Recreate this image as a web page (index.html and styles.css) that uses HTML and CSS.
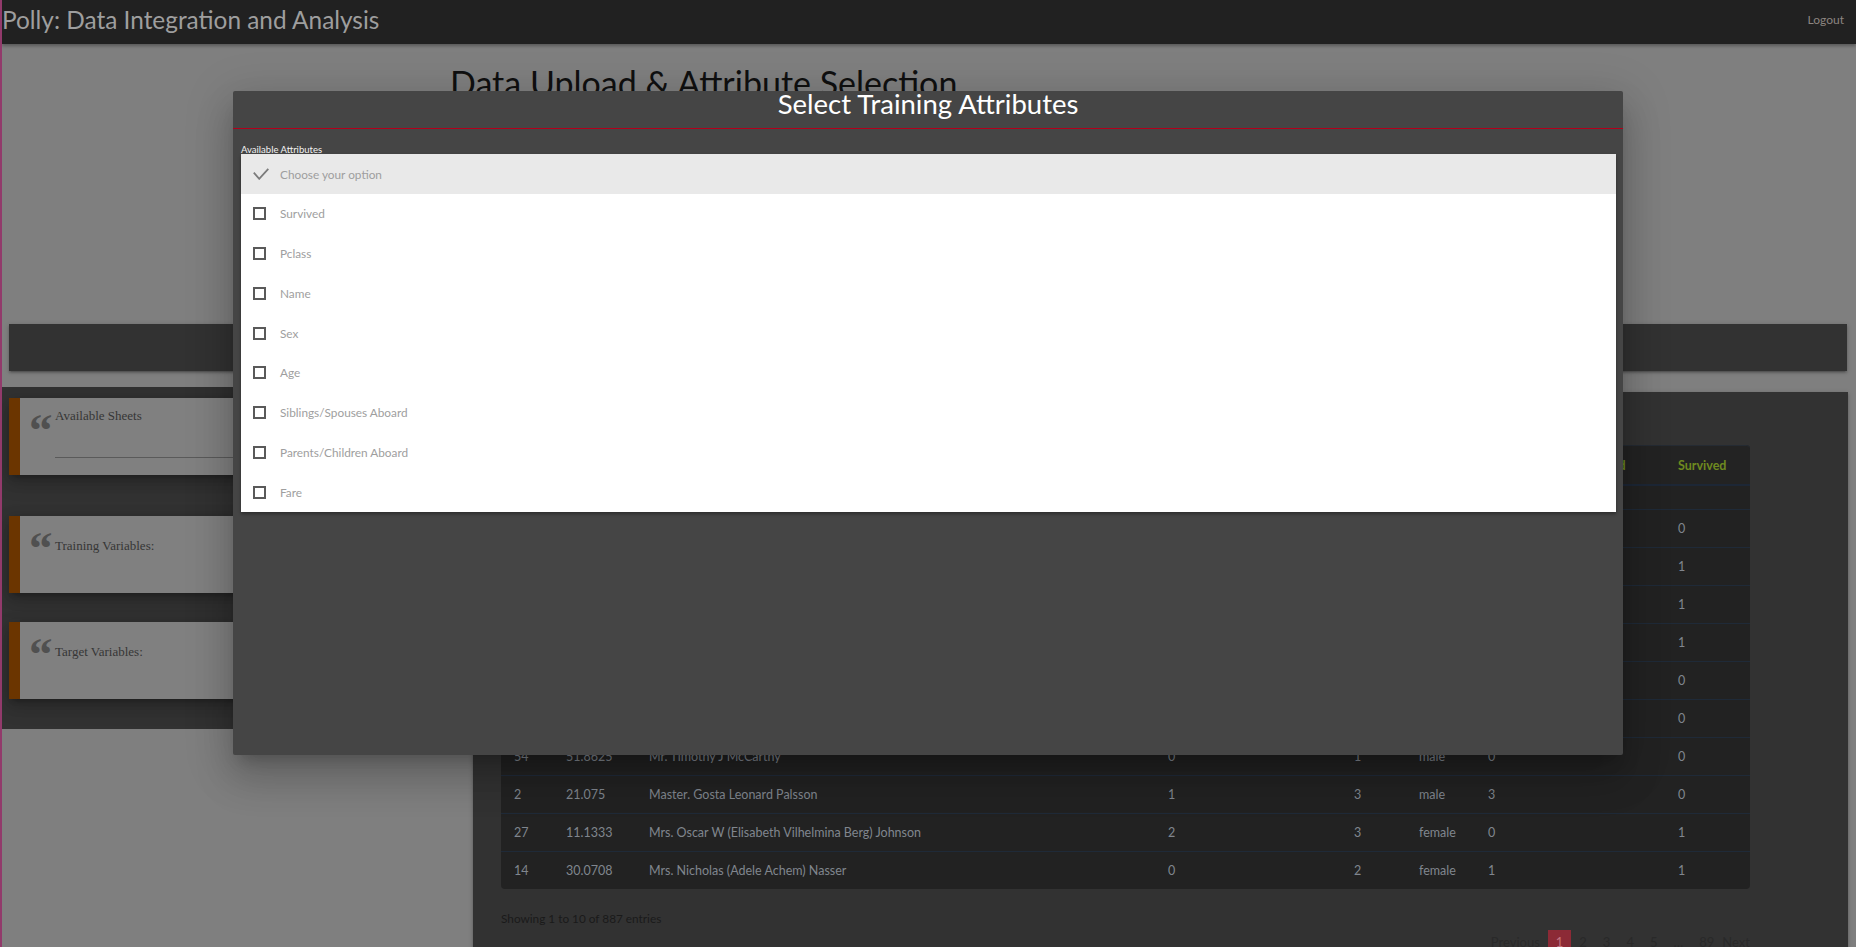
FILE: index.html
```html
<!DOCTYPE html>
<html lang="en">
<head>
<meta charset="utf-8">
<title>Polly: Data Integration and Analysis</title>
<link rel="stylesheet" href="styles.css">
</head>
<body>
<nav class="navbar">
  <a class="brand">Polly: Data Integration and Analysis</a>
  <a class="logout">Logout</a>
</nav>
<main class="page">
  <section class="upload">
    <h1 class="page-title">Data Upload &amp; Attribute Selection</h1>
  </section>
  <div class="tabs-bar"></div>
  <div class="workspace">
    <aside class="side-card">
      <div class="note note-sheets">
        <span class="quote">&ldquo;</span>
        <div class="note-body">
          <div class="note-label">Available Sheets</div>
          <div class="note-input"></div>
        </div>
      </div>
      <div class="note note-training">
        <span class="quote">&ldquo;</span>
        <div class="note-body">
          <div class="note-label note-label-low">Training Variables:</div>
        </div>
      </div>
      <div class="note">
        <span class="quote">&ldquo;</span>
        <div class="note-body">
          <div class="note-label note-label-low">Target Variables:</div>
        </div>
      </div>
    </aside>
    <section class="data-card">
      <table class="data-table">
        <colgroup>
          <col class="c-age"><col class="c-fare"><col class="c-name"><col class="c-parch">
          <col class="c-pclass"><col class="c-sex"><col class="c-sib"><col class="c-surv">
        </colgroup>
        <thead>
          <tr>
            <th>Age</th><th>Fare</th><th>Name</th><th>Parents/Children Aboard</th>
            <th>Pclass</th><th>Sex</th><th>Siblings/Spouses Aboard</th><th>Survived</th>
          </tr>
        </thead>
        <tbody>
          <tr class="spacer"><td></td><td></td><td></td><td></td><td></td><td></td><td></td><td></td></tr>
          <tr><td>22</td><td>7.25</td><td>Mr. Owen Harris Braund</td><td>0</td><td>3</td><td>male</td><td>1</td><td>0</td></tr>
          <tr><td>38</td><td>71.2833</td><td>Mrs. John Bradley (Florence Briggs Thayer) Cumings</td><td>0</td><td>1</td><td>female</td><td>1</td><td>1</td></tr>
          <tr><td>26</td><td>7.925</td><td>Miss. Laina Heikkinen</td><td>0</td><td>3</td><td>female</td><td>0</td><td>1</td></tr>
          <tr><td>35</td><td>53.1</td><td>Mrs. Jacques Heath (Lily May Peel) Futrelle</td><td>0</td><td>1</td><td>female</td><td>1</td><td>1</td></tr>
          <tr><td>35</td><td>8.05</td><td>Mr. William Henry Allen</td><td>0</td><td>3</td><td>male</td><td>0</td><td>0</td></tr>
          <tr><td>27</td><td>8.4583</td><td>Mr. James Moran</td><td>0</td><td>3</td><td>male</td><td>0</td><td>0</td></tr>
          <tr><td>54</td><td>51.8625</td><td>Mr. Timothy J McCarthy</td><td>0</td><td>1</td><td>male</td><td>0</td><td>0</td></tr>
          <tr><td>2</td><td>21.075</td><td>Master. Gosta Leonard Palsson</td><td>1</td><td>3</td><td>male</td><td>3</td><td>0</td></tr>
          <tr><td>27</td><td>11.1333</td><td>Mrs. Oscar W (Elisabeth Vilhelmina Berg) Johnson</td><td>2</td><td>3</td><td>female</td><td>0</td><td>1</td></tr>
          <tr><td>14</td><td>30.0708</td><td>Mrs. Nicholas (Adele Achem) Nasser</td><td>0</td><td>2</td><td>female</td><td>1</td><td>1</td></tr>
        </tbody>
      </table>
      <div class="table-footer">
        <div class="info">Showing 1 to 10 of 887 entries</div>
        <div class="pager">
          <span class="pg pg-text">Previous</span>
          <span class="pg pg-active">1</span>
          <span class="pg">2</span>
          <span class="pg">3</span>
          <span class="pg">4</span>
          <span class="pg">5</span>
          <span class="pg">&hellip;</span>
          <span class="pg">89</span>
          <span class="pg pg-text">Next</span>
        </div>
      </div>
    </section>
  </div>
</main>

<div class="modal">
  <div class="modal-header">Select Training Attributes</div>
  <div class="modal-body">
    <label class="field-label">Available Attributes</label>
    <ul class="option-list">
      <li class="option option-placeholder">
        <span class="opt-icon"><svg class="check" width="16" height="12" viewBox="0 0 16 12"><polyline points="0.8,4.6 6.2,10.8 15.3,0.8" fill="none" stroke="#7b7b7b" stroke-width="1.8"/></svg></span>
        <span>Choose your option</span>
      </li>
      <li class="option"><span class="opt-icon"><span class="box"></span></span><span>Survived</span></li>
      <li class="option"><span class="opt-icon"><span class="box"></span></span><span>Pclass</span></li>
      <li class="option"><span class="opt-icon"><span class="box"></span></span><span>Name</span></li>
      <li class="option"><span class="opt-icon"><span class="box"></span></span><span>Sex</span></li>
      <li class="option"><span class="opt-icon"><span class="box"></span></span><span>Age</span></li>
      <li class="option"><span class="opt-icon"><span class="box"></span></span><span>Siblings/Spouses Aboard</span></li>
      <li class="option"><span class="opt-icon"><span class="box"></span></span><span>Parents/Children Aboard</span></li>
      <li class="option"><span class="opt-icon"><span class="box"></span></span><span>Fare</span></li>
    </ul>
  </div>
</div>
</body>
</html>
```

FILE: styles.css
```css
html, body {
  margin: 0;
  height: 100%;
  overflow: hidden;
}

body {
  background: #7f7f7f;
  font-family: Lato, "Open Sans", sans-serif;
  border-left: 2px solid #923a6b;
  box-sizing: border-box;
}

/* ---------- navbar ---------- */
.navbar {
  height: 44px;
  background: #212121;
  display: flex;
  align-items: flex-start;
  justify-content: space-between;
  box-shadow: 0 2px 3px rgba(0, 0, 0, 0.3);
  position: relative;
  z-index: 1;
}

.brand {
  font-size: 24.4px;
  line-height: 40px;
  color: #9e9e9e;
}

.logout {
  font-size: 12px;
  line-height: 40px;
  color: #8c8580;
  padding-right: 12px;
}

/* ---------- page ---------- */
.upload {
  height: 280px;
}

.page-title {
  margin: 0;
  padding: 18px 0 0 448px;
  font-size: 34px;
  font-weight: 400;
  line-height: 42px;
  color: #101010;
}

.tabs-bar {
  height: 47px;
  margin: 0 9px 0 7px;
  background: #323232;
  box-shadow: 0 2px 2px rgba(0, 0, 0, 0.14), 0 3px 1px -2px rgba(0, 0, 0, 0.12), 0 1px 5px rgba(0, 0, 0, 0.2);
}

.workspace {
  display: flex;
  align-items: flex-start;
  gap: 10px;
  margin-top: 16px;
  padding-right: 8px;
}

/* ---------- left card ---------- */
.side-card {
  width: 461px;
  flex-shrink: 0;
  box-sizing: border-box;
  background: #323232;
  padding: 11px 7px 30px 7px;
}

.note {
  height: 77px;
  box-sizing: border-box;
  display: flex;
  align-items: flex-start;
  padding: 10px 0 0 9px;
  background: #808080;
  border-left: 11px solid #6b3500;
  box-shadow: 0 8px 17px 2px rgba(0, 0, 0, 0.14), 0 3px 14px 2px rgba(0, 0, 0, 0.12), 0 5px 5px -3px rgba(0, 0, 0, 0.2);
}

.note-sheets {
  margin-bottom: 41px;
}

.note-training {
  margin-bottom: 29px;
}

.quote {
  width: 26px;
  flex-shrink: 0;
  height: 45px;
  font-family: "Liberation Serif", serif;
  font-weight: 700;
  font-size: 47px;
  line-height: 45px;
  color: #505050;
}

.note-body {
  flex: 1;
  display: flex;
  flex-direction: column;
  padding-right: 20px;
}

.note-label {
  font-family: "Liberation Serif", serif;
  font-size: 13px;
  line-height: 15.6px;
  color: #363636;
}

.note-label-low {
  margin-top: 12px;
}

.note-input {
  height: 33px;
  border-bottom: 1px solid #5a5a5a;
}

/* ---------- right card ---------- */
.data-card {
  flex: 1;
  margin-top: 5px;
  min-height: 620px;
  background: #323232;
  padding: 53px 0 0 28px;
  box-shadow: 0 2px 2px rgba(0, 0, 0, 0.14), 0 1px 5px rgba(0, 0, 0, 0.2);
}

.data-table {
  width: 1249px;
  table-layout: fixed;
  border-collapse: separate;
  border-spacing: 0;
  background: #222222;
  border-radius: 4px;
  font-size: 12.5px;
}

.c-age { width: 52px; }
.c-fare { width: 83px; }
.c-name { width: 519px; }
.c-parch { width: 186px; }
.c-pclass { width: 65px; }
.c-sex { width: 69px; }
.c-sib { width: 190px; }
.c-surv { width: 85px; }

.data-table th {
  height: 38px;
  padding: 0 0 0 13px;
  text-align: left;
  font-weight: 700;
  color: #6f8a1f;
  background: #232323;
  border-top: 1px solid #252b33;
  border-bottom: 2px solid #1d2736;
  white-space: nowrap;
}

.data-table th:first-child { border-top-left-radius: 4px; }
.data-table th:last-child { border-top-right-radius: 4px; }

.data-table td {
  height: 37px;
  padding: 0 0 0 13px;
  color: #80868e;
  border-bottom: 1px solid #1f2a38;
  white-space: nowrap;
  overflow: hidden;
}

.data-table tr.spacer td {
  height: 23px;
}

.data-table tbody tr:last-child td {
  border-bottom: none;
}

.table-footer {
  width: 1249px;
}

.info {
  margin-top: 22px;
  font-size: 11.8px;
  line-height: 16px;
  color: #1a1a1a;
}

.pager {
  margin-top: 3px;
  display: flex;
  justify-content: flex-end;
  font-size: 13px;
  line-height: 24px;
  color: #292929;
}

.pg {
  padding: 0 8px;
}

.pg-text {
  padding: 0 8px 0 0;
}

.pager .pg-text:last-child {
  padding: 0;
}

.pg-active {
  background: #8c2a36;
  color: #c27280;
}

/* ---------- modal ---------- */
.modal {
  position: absolute;
  left: 233px;
  top: 91px;
  width: 1390px;
  height: 664px;
  background: #454545;
  border-radius: 2px;
  z-index: 10;
  box-shadow: 0 24px 38px 3px rgba(0, 0, 0, 0.14), 0 9px 46px 8px rgba(0, 0, 0, 0.12), 0 11px 15px -7px rgba(0, 0, 0, 0.2);
}

.modal-header {
  height: 37px;
  border-bottom: 1px solid #b3001b;
  text-align: center;
  color: #ffffff;
  font-size: 27.5px;
  line-height: 26px;
}

.modal-body {
  padding: 0 7px 0 8px;
}

.field-label {
  display: block;
  margin-top: 16px;
  font-size: 9.5px;
  line-height: 9px;
  color: #f2f2f2;
}

.option-list {
  margin: 0;
  padding: 0;
  list-style: none;
  background: #ffffff;
  box-shadow: 0 2px 3px rgba(0, 0, 0, 0.35);
}

.option {
  height: 39.75px;
  display: flex;
  align-items: center;
  padding-left: 12px;
  font-size: 11.8px;
  color: #9e9e9e;
}

.option-placeholder {
  height: 40px;
  background: #e9e9e9;
}

.opt-icon {
  width: 27px;
  flex-shrink: 0;
  display: flex;
  align-items: center;
}

.check {
  display: block;
}

.box {
  width: 13px;
  height: 13px;
  box-sizing: border-box;
  border: 2px solid #5a5a5a;
}
```
